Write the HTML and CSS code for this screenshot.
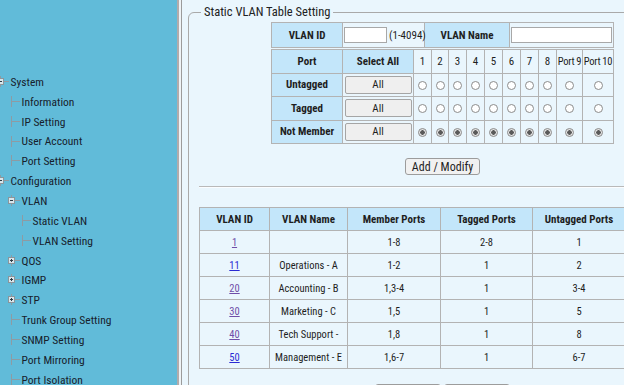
FILE: index.html
```html
<!DOCTYPE html>
<html lang="en">
<head>
    <meta charset="UTF-8">
    <meta name="viewport" content="width=device-width, initial-scale=1.0">
    <title>Static VLAN</title>
    <link rel="stylesheet" href="styles.css">
</head>
<body>
<div class="frames">

    <nav class="menu">
        <ul class="tree">
            <li class="node lv0"><span class="join"><i class="toggle minus"></i></span><span class="label">System</span></li>
            <li class="node lv1"><span class="join"></span><span class="label">Information</span></li>
            <li class="node lv1"><span class="join"></span><span class="label">IP Setting</span></li>
            <li class="node lv1"><span class="join"></span><span class="label">User Account</span></li>
            <li class="node lv1"><span class="join"></span><span class="label">Port Setting</span></li>
            <li class="node lv0"><span class="join"><i class="toggle minus"></i></span><span class="label">Configuration</span></li>
            <li class="node lv1"><span class="join"><i class="toggle minus"></i></span><span class="label">VLAN</span></li>
            <li class="node lv2"><span class="join"></span><span class="label">Static VLAN</span></li>
            <li class="node lv2"><span class="join"></span><span class="label">VLAN Setting</span></li>
            <li class="node lv1"><span class="join"><i class="toggle plus"></i></span><span class="label">QOS</span></li>
            <li class="node lv1"><span class="join"><i class="toggle plus"></i></span><span class="label">IGMP</span></li>
            <li class="node lv1"><span class="join"><i class="toggle plus"></i></span><span class="label">STP</span></li>
            <li class="node lv1"><span class="join"></span><span class="label">Trunk Group Setting</span></li>
            <li class="node lv1"><span class="join"></span><span class="label">SNMP Setting</span></li>
            <li class="node lv1"><span class="join"></span><span class="label">Port Mirroring</span></li>
            <li class="node lv1"><span class="join"></span><span class="label">Port Isolation</span></li>
        </ul>
    </nav>

    <div class="divider"></div>

    <main class="content">
        <fieldset class="panel">
            <legend>Static VLAN Table Setting</legend>

            <table class="grid vlan-head">
                <colgroup><col style="width:71px"><col style="width:82px"><col style="width:85px"><col style="width:104px"></colgroup>
                <tr>
                    <th>VLAN ID</th>
                    <td class="left"><input type="text" class="vid"><span class="range">(1-4094)</span></td>
                    <th>VLAN Name</th>
                    <td><input type="text" class="vname"></td>
                </tr>
            </table>

            <table class="grid ports">
                <colgroup>
                    <col style="width:71px"><col style="width:71px">
                    <col style="width:18px"><col style="width:17px"><col style="width:18px"><col style="width:18px">
                    <col style="width:18px"><col style="width:18px"><col style="width:18px"><col style="width:18px">
                    <col style="width:26px"><col style="width:31px">
                </colgroup>
                <tr>
                    <th>Port</th><th>Select All</th>
                    <td>1</td><td>2</td><td>3</td><td>4</td><td>5</td><td>6</td><td>7</td><td>8</td><td class="pn">Port 9</td><td class="pn">Port 10</td>
                </tr>
                <tr>
                    <th>Untagged</th><td><button class="all">All</button></td>
                    <td><input type="radio" name="p1"></td><td><input type="radio" name="p2"></td><td><input type="radio" name="p3"></td><td><input type="radio" name="p4"></td><td><input type="radio" name="p5"></td>
                    <td><input type="radio" name="p6"></td><td><input type="radio" name="p7"></td><td><input type="radio" name="p8"></td><td><input type="radio" name="p9"></td><td><input type="radio" name="p10"></td>
                </tr>
                <tr>
                    <th>Tagged</th><td><button class="all">All</button></td>
                    <td><input type="radio" name="p1"></td><td><input type="radio" name="p2"></td><td><input type="radio" name="p3"></td><td><input type="radio" name="p4"></td><td><input type="radio" name="p5"></td>
                    <td><input type="radio" name="p6"></td><td><input type="radio" name="p7"></td><td><input type="radio" name="p8"></td><td><input type="radio" name="p9"></td><td><input type="radio" name="p10"></td>
                </tr>
                <tr>
                    <th>Not Member</th><td><button class="all">All</button></td>
                    <td><input type="radio" name="p1" checked></td><td><input type="radio" name="p2" checked></td><td><input type="radio" name="p3" checked></td><td><input type="radio" name="p4" checked></td><td><input type="radio" name="p5" checked></td>
                    <td><input type="radio" name="p6" checked></td><td><input type="radio" name="p7" checked></td><td><input type="radio" name="p8" checked></td><td><input type="radio" name="p9" checked></td><td><input type="radio" name="p10" checked></td>
                </tr>
            </table>

            <div class="actions">
                <button class="btn">Add / Modify</button>
            </div>

            <hr>

            <table class="grid list">
                <colgroup><col style="width:70px"><col style="width:78px"><col style="width:93px"><col style="width:92px"><col style="width:93px"></colgroup>
                <tr><th>VLAN ID</th><th>VLAN Name</th><th>Member Ports</th><th>Tagged Ports</th><th>Untagged Ports</th></tr>
                <tr><td><a href="#" class="seen">1</a></td><td></td><td>1-8</td><td>2-8</td><td>1</td></tr>
                <tr><td><a href="#">11</a></td><td>Operations - A</td><td>1-2</td><td>1</td><td>2</td></tr>
                <tr><td><a href="#" class="seen">20</a></td><td>Accounting - B</td><td>1,3-4</td><td>1</td><td>3-4</td></tr>
                <tr><td><a href="#" class="seen">30</a></td><td>Marketing - C</td><td>1,5</td><td>1</td><td>5</td></tr>
                <tr><td><a href="#" class="seen">40</a></td><td>Tech Support -</td><td>1,8</td><td>1</td><td>8</td></tr>
                <tr><td><a href="#">50</a></td><td>Management - E</td><td>1,6-7</td><td>1</td><td>6-7</td></tr>
            </table>

            <div class="actions bottom">
                <button class="btn wide">Delete</button>
                <button class="btn wide">Refresh</button>
            </div>
        </fieldset>
    </main>

</div>
</body>
</html>
```

FILE: styles.css
```css
* {
    box-sizing: border-box;
}
body {
    margin: 0;
    font-family: "Roboto Condensed", "Liberation Sans", Arial, sans-serif;
    color: #1e1e1e;
    overflow: hidden;
}
.frames {
    display: flex;
    height: 385px;
}

/* left menu */
.menu {
    width: 177px;
    flex: none;
    background: #61bbd9;
    overflow: hidden;
    padding-top: 72px;
}
.tree {
    list-style: none;
    margin: 0;
    padding: 0;
}
.node {
    display: flex;
    align-items: center;
    height: 19.85px;
    font-size: 11.5px;
    color: #17212c;
    white-space: nowrap;
}
.lv0 { padding-left: 0; margin-left: -5.5px; }
.lv1 { padding-left: 5.5px; }
.lv2 { padding-left: 16.5px; }
.join {
    position: relative;
    width: 11px;
    height: 100%;
    flex: none;
    margin-right: 5px;
}
.join::before {
    content: "";
    position: absolute;
    left: 5px;
    top: 4px;
    width: 1px;
    height: 11px;
    background: #8d9ba3;
}
.join::after {
    content: "";
    position: absolute;
    left: 5px;
    top: 9px;
    width: 9px;
    height: 1px;
    background: #8d9ba3;
}
.toggle {
    position: absolute;
    left: 2px;
    top: 6px;
    width: 7px;
    height: 7px;
    z-index: 1;
    border: 1px solid #8a969c;
    background-color: #d9e6ec;
    background-repeat: no-repeat;
    background-position: center;
}
.minus {
    background-image: linear-gradient(#2b3b44, #2b3b44);
    background-size: 3px 1px;
}
.plus {
    background-image: linear-gradient(#2b3b44, #2b3b44), linear-gradient(#2b3b44, #2b3b44);
    background-size: 3px 1px, 1px 3px;
}

.divider {
    width: 5px;
    flex: none;
    border-left: 2px solid #b2abab;
    border-right: 1px solid #9b9b9b;
    background: #eef3f6;
}

/* main frame */
.content {
    flex: 1;
    min-width: 0;
    background: #eaf6fd;
    overflow: hidden;
    padding: 5px 0 0 6px;
}
.panel {
    margin: 0;
    width: 509px;
    min-width: 0;
    padding: 3px 10px 0;
    border: 1px solid #a9a9a9;
    border-radius: 6px;
}
.panel legend {
    margin-left: 2px;
    padding: 0 3px;
    font-size: 12.5px;
    line-height: 14px;
    color: #222;
}

.grid {
    border-collapse: collapse;
    table-layout: fixed;
    font-size: 11px;
}
.grid th, .grid td {
    border: 1px solid #b3b3b3;
    padding: 0;
    text-align: center;
    white-space: nowrap;
}
.grid th {
    background: #c3e6fa;
    font-weight: bold;
}
.grid td.left {
    text-align: left;
    padding-left: 1px;
}
.grid td.pn {
    font-size: 10.5px;
    letter-spacing: -0.3px;
}

.vlan-head {
    width: 342px;
    margin: 0 auto;
}
.vlan-head tr {
    height: 25px;
}
.vlan-head input {
    height: 16px;
    border: 1px solid #a8a8a8;
    background: #fff;
    font-size: 11px;
    vertical-align: middle;
}
.vid {
    width: 43px;
}
.range {
    margin-left: 2px;
    vertical-align: middle;
}
.vname {
    width: 101px;
}

.ports {
    width: 342px;
    margin: 1px auto 0;
}
.ports tr {
    height: 23.5px;
}
.ports input[type="radio"] {
    appearance: none;
    margin: 0;
    width: 9px;
    height: 9px;
    border: 1px solid #8c8c8c;
    border-radius: 50%;
    background: #fff;
    vertical-align: middle;
}
.ports input[type="radio"]:checked {
    background: radial-gradient(circle, #5a5a5a 0 2px, #e4e4e4 2.5px);
}
.all {
    width: 67px;
    height: 18px;
    padding: 0;
    border: 1px solid #a5a5a5;
    border-radius: 2px;
    background: #efefef;
    font-family: inherit;
    font-size: 11px;
    color: #1e1e1e;
    vertical-align: middle;
}

.actions {
    display: flex;
    justify-content: center;
    gap: 3px;
    margin-top: 14px;
}
.btn {
    height: 17px;
    padding: 0 6px;
    border: 1px solid #9c9c9c;
    border-radius: 3px;
    background: #f1f1f1;
    font-family: inherit;
    font-size: 12px;
    line-height: 14px;
    color: #1e1e1e;
}
.btn.wide {
    width: 66px;
}
.actions.bottom {
    margin-top: 15px;
}

.panel hr {
    margin: 11px 0 0;
    border: 0;
    border-top: 1px solid #b9b9b9;
    border-bottom: 1px solid #fbfdff;
}

.list {
    width: 426px;
    margin-top: 19px;
}
.list tr {
    height: 23px;
}
.list td {
    font-size: 10.5px;
}
.list a {
    color: #2b2bd3;
}
.list a.seen {
    color: #6f4ea8;
}
```
